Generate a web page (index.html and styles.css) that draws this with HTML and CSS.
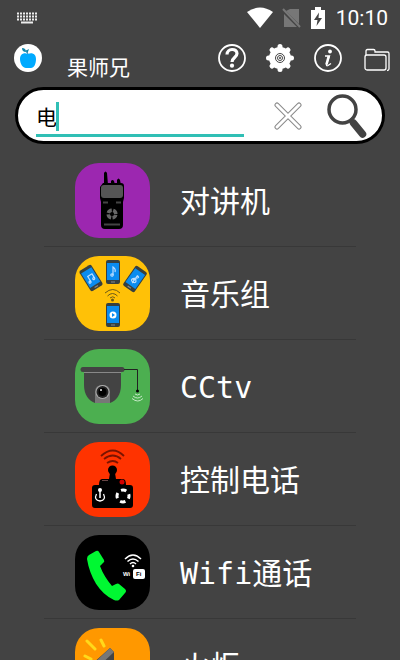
FILE: index.html
```html
<!DOCTYPE html>
<html lang="zh-CN">
<head>
  <meta charset="UTF-8" />
  <meta name="viewport" content="width=device-width, initial-scale=1" />
  <title>果师兄</title>
  <link rel="stylesheet" href="styles.css">
</head>
<body>
  <!-- Status bar -->
  <div class="status-bar">
    <svg class="keyboard" width="22" height="12" viewBox="0 0 22 12">
      <path d="M1 1.500h20M1 4.500h20M1 7.500h20" stroke="#eee" stroke-width="2" stroke-dasharray="2 1"/>
      <path d="M5 10.500h12" stroke="#eee" stroke-width="2"/>
    </svg>
    <svg width="26" height="22" viewBox="0 0 26 22">
      <path d="M0 5Q13-4 26 5L13 21z" fill="#fff"/>
    </svg>
    <svg width="20" height="22" viewBox="0 0 20 22">
      <path d="M8 2h9v15L4 4zM2 7l13 13H2z" fill="#777"/>
      <path d="M1 2l17 18" stroke="#777" stroke-width="2"/>
    </svg>
    <svg width="14" height="22" viewBox="0 0 14 22">
      <path d="M0 3h4V0h6v3h4v19H0z" fill="#fff"/>
      <path d="M8 5.500L3 13h3.500L5.500 19 11 11H7.500z" fill="#434343"/>
    </svg>
    <span class="clock">10:10</span>
  </div>

  <!-- App header -->
  <header class="top-bar">
    <svg width="28" height="28" viewBox="0 0 28 28">
      <circle cx="14" cy="14" r="14" fill="#fff"/>
      <path d="M14 10C10 8 6 10 6 15c0 5 3 9 6 9h5c3 0 5-4 5-9 0-5-4-7-8-5z" fill="#0af"/>
      <path d="M14 10L12 6" stroke="#27a" stroke-width="1"/>
      <path d="M8 4q4 0 4 4-4 0-4-4zM12.500 9q-1-3 2.500-4-.5 3-2.500 4z" fill="#18a"/>
    </svg>
    <h1>果师兄</h1>
    <nav class="actions">
      <button class="icon-btn" aria-label="帮助">
        <svg width="28" height="28" viewBox="0 0 28 28" fill="none" stroke="#fff">
          <circle cx="14" cy="14" r="13" stroke-width="1.800"/>
          <path d="M9 10.500C9 4 19 4 19 9.500 19 13.500 14 13.500 14 18" stroke-width="3.200"/>
          <circle cx="14" cy="21.700" r="2.100" fill="#fff" stroke="none"/>
        </svg>
      </button>
      <button class="icon-btn" aria-label="设置">
        <svg width="28" height="28" viewBox="0 0 28 28" fill="none">
          <circle cx="14" cy="14" r="11" fill="#fff"/>
          <path d="M14 2.500v23M2.500 14h23M6 6l16 16M22 6L6 22" stroke="#fff" stroke-width="5" stroke-linecap="round"/>
          <circle cx="14" cy="14" r="4.500" stroke="#434343" stroke-width="1"/>
          <circle cx="14" cy="14" r="2.500" stroke="#434343" stroke-width="1"/>
          <circle cx="14" cy="14" r="1" fill="#434343"/>
        </svg>
      </button>
      <button class="icon-btn" aria-label="关于">
        <svg width="28" height="28" viewBox="0 0 28 28" fill="none" stroke="#fff">
          <circle cx="14" cy="14" r="13" stroke-width="1.800"/>
          <circle cx="16" cy="7.500" r="1.900" fill="#fff" stroke="none"/>
          <path d="M11 12h4.500L12.500 20q-.5 2.500 1.500 1.500l3-2" stroke-width="1.300"/>
          <path d="M14.800 12l-2.300 8.500" stroke-width="2.600"/>
        </svg>
      </button>
      <button class="icon-btn folder" aria-label="文件夹">
        <svg width="26" height="24" viewBox="0 0 26 24" fill="none" stroke="#fff">
          <rect x="1" y="7" width="21" height="15" rx="2" stroke-width="1.300"/>
          <path d="M2 7V3q0-1.500 1.500-1.500h6q1.500 0 1.500 1.500v1h12.500q1.500 0 1.500 1.500V21q0 1.500-2 1.500" stroke-width="1.300"/>
        </svg>
      </button>
    </nav>
  </header>

  <!-- Search -->
  <form class="search" onsubmit="return false">
    <div class="field">
      <input type="text" id="query" aria-label="搜索" value="电" autocomplete="off" />
      <span class="caret"></span>
    </div>
    <button class="icon-btn clear" type="button" aria-label="清除" onclick="clearQuery()">
      <svg width="28" height="28" viewBox="0 0 28 28" fill="none" stroke-linecap="round">
        <path d="M3 3l22 22M25 3L3 25" stroke="#8a8a8a" stroke-width="5"/>
        <path d="M3 3l22 22M25 3L3 25" stroke="#fff" stroke-width="3"/>
      </svg>
    </button>
    <button class="icon-btn" type="submit" aria-label="搜索">
      <svg width="40" height="44" viewBox="0 0 40 44" fill="none" stroke="#434343">
        <circle cx="15.500" cy="15.500" r="13.500" stroke-width="3.500"/>
        <path d="M23 25l3 4" stroke-width="4"/>
        <path d="M26.500 29l9 11" stroke-width="7.500" stroke-linecap="round"/>
      </svg>
    </button>
  </form>

  <!-- Results -->
  <ul class="list">
    <li>
      <a class="row" href="#walkie">
        <svg class="tile purple" viewBox="0 0 75 75">
          <path d="M29 22l0-12q1.500-3 3 0l1 12zM36 22l0-4q1.500-2 3 0l1 4zM42 22l0-5q1.500-3 3 0l1 5z" fill="#000"/>
          <path d="M28 20h18q3 0 3 3v12l-1 4v23q0 4-4 4H30q-4 0-4-4V39l-1-4V24z" fill="#000"/>
          <rect x="26" y="22" width="22" height="13" rx="3" fill="#555"/>
          <path d="M28 39.500h5M41 39.500h5M29 61.500h16" stroke="#444" stroke-width="2"/>
          <circle cx="37" cy="51" r="3.800" stroke="#666" stroke-width="3.500" fill="none" stroke-dasharray="4.500 1.470" stroke-dashoffset="5.200"/>
        </svg>
        <span>对讲机</span>
      </a>
    </li>
    <li>
      <a class="row" href="#music">
        <svg class="tile amber" viewBox="0 0 75 75">
          <defs>
            <g id="phone">
              <rect x="-7" y="-12" width="14" height="24" rx="2" fill="#37403f"/>
              <rect x="-6" y="-9" width="12" height="17" fill="#0a8cf0"/>
              <path d="M-2 10h4" stroke="#888"/>
            </g>
          </defs>
          <g fill="none" stroke="#bdf" stroke-width="1.200">
            <g transform="translate(16 22) rotate(-32)">
              <use href="#phone" stroke="none"/>
              <path d="M-2 3v-6h5v5"/><circle cx="-3" cy="3" r="1"/><circle cx="2" cy="2" r="1"/>
            </g>
            <g transform="translate(38 16)">
              <use href="#phone" stroke="none"/>
              <path d="M0 3v-8q3 2 2 5"/><circle cx="-1" cy="3" r="1.200"/>
            </g>
            <g transform="translate(60 23) rotate(35)">
              <use href="#phone" stroke="none"/>
              <path d="M0 5v-9q4 0 0 3-5 4 0 5 4-1 1-4-2 0-2 2"/>
            </g>
            <g transform="translate(38 59)">
              <use href="#phone" stroke="none"/>
              <circle r="3.500" fill="#fff" stroke="none"/>
              <path d="M-1-2l3 2-3 2z" fill="#0a8cf0" stroke="none"/>
            </g>
          </g>
          <path d="M30 37q8-7 15 0M32.500 40q5-5 10 0M35 42q3-2.500 5 0" fill="none" stroke="#6b5a18" stroke-width="1"/>
          <circle cx="37.500" cy="44" r="1.500" fill="#6b5a18"/>
        </svg>
        <span>音乐组</span>
      </a>
    </li>
    <li>
      <a class="row" href="#cctv">
        <svg class="tile green" viewBox="0 0 75 75">
          <path d="M9 24h37v12c0 10-5 16-11 18H20C14 52 9 46 9 36z" fill="#434343"/>
          <path d="M9 23.500h37" stroke="#888"/>
          <path d="M20 54V43q0-7 7.500-7t7.500 7v11z" fill="#777"/>
          <circle cx="27.500" cy="43" r="7" fill="#aaa"/>
          <circle cx="27.500" cy="43" r="6" fill="#222"/>
          <circle cx="27.500" cy="43" r="4" fill="#000"/>
          <circle cx="26" cy="41" r="1" fill="#eee"/>
          <path d="M8 20.500h39" stroke="#434343" stroke-width="5" stroke-linecap="round"/>
          <path d="M49 20.500h13.500V42" fill="none" stroke="#222"/>
          <circle cx="62.500" cy="42" r="1.500" fill="#000"/>
          <path d="M60 45q2.500 2 5 0M58 47q4.500 4 9 0M57 49.500q6 5 11 0" fill="none" stroke="#c5e8c6"/>
        </svg>
        <span>CCtv</span>
      </a>
    </li>
    <li>
      <a class="row" href="#remote">
        <svg class="tile red" viewBox="0 0 75 75">
          <path d="M26 14q12-11 23 0M29 17q9-7 17 0M32 21q6-4 11 0" fill="none" stroke="#7a1400" stroke-width="1.800"/>
          <circle cx="37.500" cy="28" r="4.500" fill="#000"/>
          <path d="M35 31h5l1 6h7q3 0 3 6h4q3 0 3 3v17q0 3-3 3H20q-3 0-3-3V46q0-3 3-3h4q0-6 3-6h7z" fill="#000"/>
          <path d="M27 38.500h6" stroke="#644"/>
          <circle cx="47" cy="40" r="2.500" fill="#d10000"/>
          <circle cx="25" cy="48" r="2" fill="#fff"/>
          <path d="M25 48v8" stroke="#fff" stroke-width="1.500"/>
          <path d="M21.500 52q-3 6 3.500 7 6.500-1 3.500-7" fill="none" stroke="#fff" stroke-width="1.300"/>
          <circle cx="48" cy="54" r="6" fill="none" stroke="#fff" stroke-width="3" stroke-dasharray="5.500 3.920" stroke-dashoffset="2.750"/>
        </svg>
        <span>控制电话</span>
      </a>
    </li>
    <li>
      <a class="row" href="#wifi">
        <svg class="tile black" viewBox="0 0 75 75">
          <path d="M14 20l7-4q2-1 3 1l5 8q1 2-1 3l-3 3c3 8 7 14 12 20l4-2q2-1 3 0l6 5q2 2 0 4l-6 7q-2 1-5 0C24 58 15 42 12 24q0-3 2-4z" fill="#00f832"/>
          <path d="M50 24q8-8 16 0M52.500 26.500q5.500-5 11 0M55 29q3-3 6 0" fill="none" stroke="#fff" stroke-width="1.500"/>
          <circle cx="58" cy="31" r="1.300" fill="#fff"/>
          <rect x="58" y="34" width="12" height="10" rx="2" fill="#fff"/>
          <text class="wifi-label" x="48" y="41" fill="#fff">Wi</text>
          <text class="wifi-label" x="61" y="41" fill="#000">Fi</text>
        </svg>
        <span>Wifi通话</span>
      </a>
    </li>
    <li>
      <a class="row" href="#torch">
        <svg class="tile orange" viewBox="0 0 75 75">
          <path d="M12 13l8 8M26 12l3 6M10 28l6 3" stroke="#ffd91a" stroke-width="3" stroke-linecap="round"/>
          <path d="M35 20l4 4v10L54 49l-9 9-16-16-9-3-3-3z" fill="#444"/>
          <path d="M35 20l4 4-18 17-4-4z" fill="#777"/>
        </svg>
        <span>火炬</span>
      </a>
    </li>
  </ul>

  <script>
    function clearQuery() {
      const query = document.getElementById("query");
      query.value = "";
      query.focus();
    }
  </script>
</body>
</html>
```

FILE: styles.css
```css
* { box-sizing: border-box; }
body {
  margin: 0;
  height: 100vh;
  display: flex;
  flex-direction: column;
  overflow: hidden;
  font-family: "DejaVu Sans Mono", "Noto Sans CJK SC", monospace;
  background: #434343;
  color: #fff;
}
svg {
  display: block;
  flex: none;
}

.status-bar {
  display: flex;
  align-items: center;
  gap: 9px;
  height: 36px;
  padding: 0 12px 0 16px;
}
.keyboard {
  margin-right: auto;
}
.clock {
  margin-left: 2px;
  font: 400 21px Roboto, sans-serif;
}

.top-bar {
  display: flex;
  align-items: center;
  height: 44px;
  padding: 0 10px 0 14px;
}
.top-bar h1 {
  margin: 0 auto 0 25px;
  padding-top: 20px;
  font-size: 21px;
  font-weight: 400;
  line-height: 24px;
}
.actions {
  display: flex;
  align-items: center;
  gap: 20px;
}
.icon-btn {
  padding: 0;
  border: none;
  background: none;
  cursor: pointer;
}
.folder {
  margin-left: 2px;
  padding-top: 4px;
}

.search {
  display: flex;
  align-items: center;
  flex: none;
  height: 57px;
  margin: 7px 15px 0;
  padding: 0 15px 0 18px;
  border: 3px solid #000;
  border-radius: 29px;
  background: #fff;
}
.field {
  position: relative;
  flex: 1;
}
.field input {
  display: block;
  width: 100%;
  height: 43px;
  padding: 4px 0 0;
  border: none;
  border-bottom: 3px solid #30bfb5;
  outline: none;
  background: none;
  color: #000;
  font: 21px "Noto Sans CJK SC", sans-serif;
  caret-color: #30bfb5;
}
/* thick cursor bar after the typed text */
.caret {
  position: absolute;
  left: 20px;
  top: 8px;
  width: 3px;
  height: 29px;
  background: #30bfb5;
}
.clear {
  margin: 0 25px 0 30px;
}

.list {
  flex: 1;
  min-height: 0;
  margin: 0;
  padding: 10px 44px 0;
  overflow-y: auto;
  scrollbar-width: none;
  list-style: none;
}
.row {
  display: flex;
  align-items: center;
  gap: 30px;
  padding: 9px 0 8px 31px;
  border-bottom: 1px solid #383838;
  color: #fff;
  font-size: 30px;
  line-height: 36px;
  text-decoration: none;
}
.row span {
  padding-top: 3px;
}
.tile {
  width: 75px;
  height: 75px;
  border-radius: 24px;
}
.purple { background: #9c27b0; }
.amber { background: #ffc107; }
.green { background: #4caf50; }
.red { background: #ff3300; }
.black { background: #000; }
.orange { background: #ff9800; }

.wifi-label {
  font: bold 6px "Liberation Sans", sans-serif;
}
```
